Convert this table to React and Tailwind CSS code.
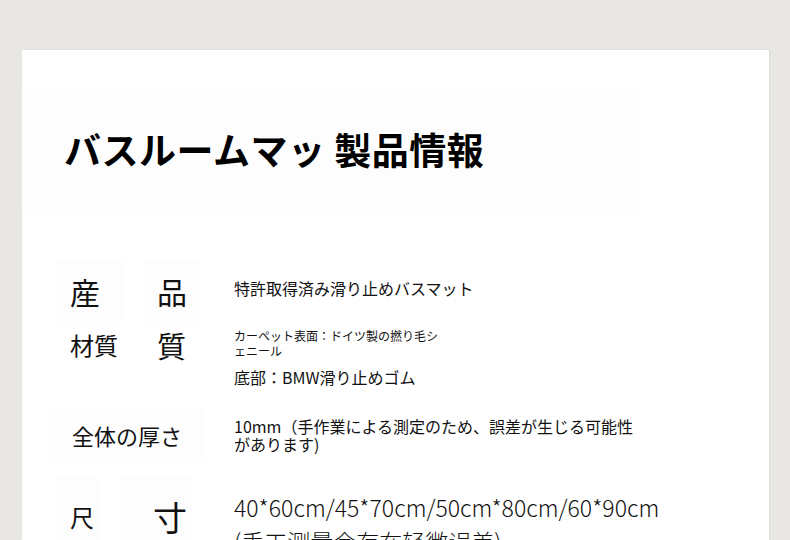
import React from 'react';

const font = { fontFamily: '"Noto Sans CJK JP", "Noto Sans", sans-serif' };

const App = () => {
  return (
    <div className="min-h-[540px] w-[790px] overflow-hidden bg-[#e8e7e3] pt-[50px] pl-[22px]" style={font}>
      <div className="w-[747px] h-[490px] pt-[38px] bg-white shadow-[1px_0_2px_rgba(0,0,0,0.06)] text-[#111]">
        {/* title block */}
        <div className="w-[618px] h-[122px] bg-[#fdfdfd] flex items-center pl-[42px]">
          <h1 className="text-[37px] font-bold leading-none tracking-[0.5px] text-black">バスルームマッ 製品情報</h1>
        </div>

        {/* 産品 */}
        <div className="mt-[50px] flex items-center h-[62px]">
          <div className="w-[212px] flex items-center h-full">
            <div className="ml-[34px] w-[70px] h-full bg-[#fdfdfd] flex items-center pl-[14px] text-[30px] leading-none">産</div>
            <div className="ml-[19px] w-[56px] h-full bg-[#fdfdfd] flex items-center pl-[12px] text-[30px] leading-none">品</div>
          </div>
          <div className="text-[16px] leading-none -mt-[6px]">特許取得済み滑り止めバスマット</div>
        </div>

        {/* 材質 */}
        <div className="flex h-[72px]">
          <div className="w-[212px] flex items-start pt-[3px]">
            <div className="ml-[34px] w-[70px] h-[40px] flex items-center pl-[14px] text-[24px] leading-none">材質</div>
            <div className="ml-[19px] w-[56px] h-[40px] flex items-center pl-[12px] text-[29px] leading-none">質</div>
          </div>
          <div className="pt-[6px]">
            <div className="w-[210px] text-[12px] leading-[15px]">カーペット表面：ドイツ製の撚り毛シェニール</div>
            <div className="mt-[11px] text-[16px] leading-none">底部：BMW滑り止めゴム</div>
          </div>
        </div>

        {/* 厚さ */}
        <div className="mt-[13px] flex h-[60px]">
          <div className="w-[212px]">
            <div className="ml-[26px] w-[158px] h-[56px] bg-[#fdfdfd] flex items-center pl-[24px] text-[22px] leading-none">全体の厚さ</div>
          </div>
          <div className="w-[405px] pt-[10px] text-[16px] leading-[18px]">
            10mm（手作業による測定のため、誤差が生じる可能性があります)
          </div>
        </div>

        {/* 尺寸 */}
        <div className="mt-[10px] flex h-[80px]">
          <div className="w-[212px] flex">
            <div className="ml-[34px] w-[44px] h-[80px] bg-[#fdfdfd] flex items-center pl-[14px] text-[24px] leading-none">尺</div>
            <div className="ml-[20px] w-[72px] h-[80px] bg-[#fdfdfd] flex items-center pl-[33px] text-[34px] leading-none">寸</div>
          </div>
          <div className="pt-[13px] font-light text-[23px] leading-[34px]">
            <div>40*60cm/45*70cm/50cm*80cm/60*90cm</div>
            <div>(手工测量会存在轻微误差)</div>
          </div>
        </div>
      </div>
    </div>
  );
};

export default App;
